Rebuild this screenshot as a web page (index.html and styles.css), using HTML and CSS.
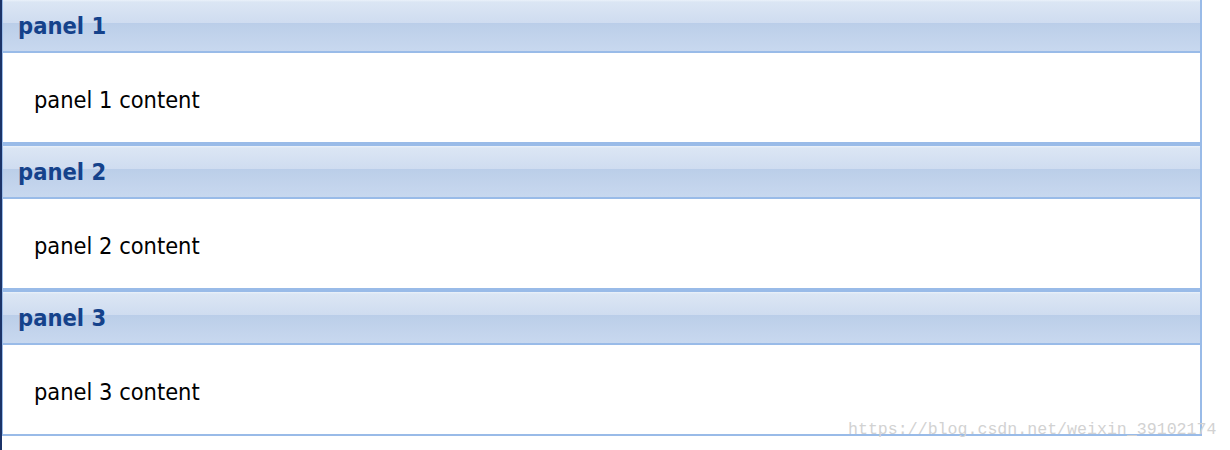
FILE: index.html
```html
<!DOCTYPE html>
<html lang="en">
<head>
    <meta charset="UTF-8">
    <title>Accordion</title>
    <link rel="stylesheet" href="styles.css">
</head>
<body>
    <div class="frame">
        <div class="edge"></div>
        <div class="accordion">
            <div class="panel first">
                <div class="panel-header"><span>panel 1</span></div>
                <div class="panel-body">panel 1 content</div>
            </div>
            <div class="panel">
                <div class="panel-header"><span>panel 2</span></div>
                <div class="panel-body">panel 2 content</div>
            </div>
            <div class="panel last">
                <div class="panel-header"><span>panel 3</span></div>
                <div class="panel-body">panel 3 content</div>
            </div>
        </div>
        <div class="watermark">https://blog.csdn.net/weixin_39102174</div>
    </div>
</body>
</html>
```

FILE: styles.css
```css
body {
    margin: 0;
    padding: 0;
    background: #fff;
    font-family: "DejaVu Sans Condensed", "DejaVu Sans", sans-serif;
}
.frame {
    position: relative;
    display: flex;
    height: 450px;
}
.edge {
    width: 2px;
    background: #1b3368;
}
.accordion {
    width: 1197px;
    align-self: flex-start;
    border-left: 1px solid #99bbe8;
    border-right: 2px solid #99bbe8;
}
.panel {
    border-top: 2px solid #99bbe8;
    border-bottom: 2px solid #99bbe8;
}
.panel.first {
    border-top: 0;
}
.panel-header {
    height: 53px;
    box-sizing: border-box;
    display: flex;
    align-items: center;
    padding-left: 15px;
    border-bottom: 2px solid #99bbe8;
    background: linear-gradient(to bottom,
        #eaf1fa 0px, #dbe6f4 2px, #cfdcf0 23px,
        #b9cde9 23px, #bccfe9 25px, #c8d8ef 51px);
    color: #15428b;
    font-weight: bold;
    font-size: 23.5px;
}
.panel-header span {
    margin-top: 1px;
}
.panel-body {
    height: 89px;
    box-sizing: border-box;
    display: flex;
    align-items: center;
    padding-left: 31px;
    padding-top: 4px;
    font-size: 23.4px;
    color: #000;
}
.watermark {
    position: absolute;
    left: 848px;
    top: 420px;
    font-family: "Liberation Mono", monospace;
    font-size: 16.6px;
    color: #d2d2d2;
    white-space: nowrap;
}
```
